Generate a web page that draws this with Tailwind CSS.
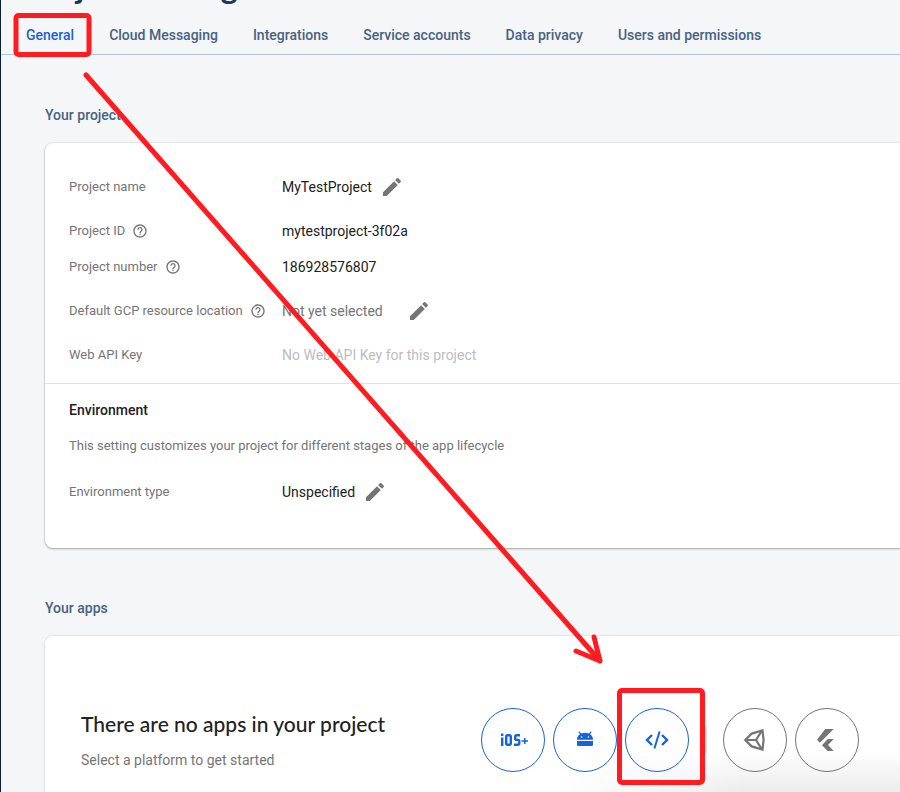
<!DOCTYPE html>
<html lang="en">
<head>
<meta charset="utf-8">
<title>Project settings</title>
<meta name="viewport" content="width=device-width, initial-scale=1">
<script src="https://cdn.jsdelivr.net/npm/@tailwindcss/browser@4"></script>
</head>
<body class="bg-[#f4f6f8] font-[Roboto,sans-serif] text-sm leading-5 text-[#212121]">
<svg class="hidden" aria-hidden="true">
  <symbol id="pencil" viewBox="0 0 24 24"><path d="M3 17.25V21h3.75L17.81 9.94l-3.75-3.75L3 17.25zM20.71 7.04a1 1 0 0 0 0-1.41l-2.34-2.34a1 1 0 0 0-1.41 0l-1.83 1.83 3.75 3.75 1.83-1.83z"/></symbol>
  <symbol id="help" viewBox="0 0 24 24"><path d="M11 18h2v-2h-2v2zm1-16C6.48 2 2 6.48 2 12s4.48 10 10 10 10-4.480 10-10S17.520 2 12 2zm0 18c-4.410 0-8-3.590-8-8s3.590-8 8-8 8 3.590 8 8-3.590 8-8 8zm0-14c-2.210 0-4 1.790-4 4h2c0-1.100.9-2 2-2s2 .9 2 2c0 2-3 1.750-3 5h2c0-2.250 3-2.500 3-5 0-2.210-1.790-4-4-4z"/></symbol>
</svg>
<div class="relative h-screen overflow-hidden border-l border-[#0b1f38]">
  <header class="border-b border-[#b0c4de]">
    <h1 class="-mt-8 px-6 font-[Lato,sans-serif] text-[33px] leading-9 font-bold text-[#1c3a57]">Project settings</h1>
    <nav class="flex h-[50px] items-center gap-[35px] pt-3 pl-[25px] font-medium whitespace-nowrap text-[#476282]">
      <a href="#" class="text-[#1a5fd0]">General</a>
      <a href="#">Cloud Messaging</a>
      <a href="#">Integrations</a>
      <a href="#">Service accounts</a>
      <a href="#">Data privacy</a>
      <a href="#">Users and permissions</a>
    </nav>
  </header>

  <main class="pl-11">
    <h2 class="mt-[50px] font-medium text-[#476282]">Your project</h2>
    <section class="mt-[18px] rounded-l-lg bg-white shadow-[0_0_2px_rgba(0,0,0,0.18),0_1px_2px_rgba(0,0,0,0.3)]">
      <dl class="grid grid-cols-[213px_1fr] items-center px-6 pt-[22px] pb-[6px] text-[13px] text-[#757575] [&>dd]:text-sm [&>dt]:flex [&>dt]:gap-[7px] [&>dt]:items-center">
        <dt class="h-11">Project name</dt>
        <dd class="flex items-center gap-2 text-[#212121]">MyTestProject <button aria-label="Edit project name"><svg class="size-6 fill-[#757575]"><use href="#pencil"/></svg></button></dd>
        <dt class="h-11">Project ID <svg class="size-4 fill-[#757575]"><use href="#help"/></svg></dt>
        <dd class="text-[#212121]">mytestproject-3f02a</dd>
        <dt class="h-7">Project number <svg class="size-4 fill-[#757575]"><use href="#help"/></svg></dt>
        <dd class="text-[#212121]">186928576807</dd>
        <dt class="mt-2 h-11">Default GCP resource location <svg class="size-4 fill-[#757575]"><use href="#help"/></svg></dt>
        <dd class="mt-2 flex items-center gap-6">Not yet selected <button aria-label="Edit resource location"><svg class="size-6 fill-[#757575]"><use href="#pencil"/></svg></button></dd>
        <dt class="h-11">Web API Key</dt>
        <dd class="text-[#bdbdbd]">No Web API Key for this project</dd>
      </dl>
      <div class="border-t border-[#e0e3e6] px-6 pt-4 pb-[34px]">
        <h3 class="font-medium">Environment</h3>
        <p class="mt-4 text-[13px] text-[#757575]">This setting customizes your project for different stages of the app lifecycle</p>
        <dl class="mt-[14px] grid grid-cols-[213px_1fr] items-center">
          <dt class="flex h-11 items-center text-[13px] text-[#757575]">Environment type</dt>
          <dd class="flex items-center gap-2">Unspecified <button aria-label="Edit environment type"><svg class="size-6 fill-[#757575]"><use href="#pencil"/></svg></button></dd>
        </dl>
      </div>
    </section>

    <h2 class="mt-[50px] font-medium text-[#476282]">Your apps</h2>
    <section class="mt-[18px] flex items-start rounded-l-lg bg-[linear-gradient(to_right,white_60%,transparent_82%),linear-gradient(to_bottom,white_115px,#eaeaea_160px)] pt-[72px] pr-[41px] pb-10 pl-9 shadow-[0_0_2px_rgba(0,0,0,0.25)]">
      <div class="flex-1">
        <h3 class="mt-[2px] font-[Lato,sans-serif] text-[21px] leading-7 font-medium">There are no apps in your project</h3>
        <p class="mt-3 text-[#757575]">Select a platform to get started</p>
      </div>
      <div class="flex items-center gap-2 [&>button]:flex [&>button]:size-16 [&>button]:items-center [&>button]:justify-center [&>button]:rounded-full [&>button]:border">
        <button class="border-[#1763dc] text-[#1763dc]" aria-label="iOS+">
          <svg class="h-4 w-[30px]" viewBox="0 0 30 16" fill="none" stroke="currentColor" stroke-width="2.400"><path d="M4.200 5.500V14M4.200 1.500V4M8.200 4.700q0-1.500 1.500-1.500h1.600q1.500 0 1.500 1.500v6.600q0 1.500-1.500 1.500H9.700q-1.500 0-1.500-1.500zM22 3.200h-3.300q-1.500 0-1.500 1.500v1.700q0 1.500 1.500 1.500h1.100q1.500 0 1.500 1.500v1.900q0 1.500-1.500 1.500H16"/><path d="M23.500 9H30M26.800 6v6" stroke-width="1.500"/></svg>
        </button>
        <button class="border-[#1763dc] text-[#1763dc]" aria-label="Android">
          <svg class="size-4 overflow-visible" viewBox="0 0 16 16" fill="currentColor"><path d="M0 9h16v3.700q0 1.300-1.300 1.300H1.300Q0 14 0 12.700zM0 7.800Q0 4 3 2.200L1.400-.1l.8-.6 2 2.200Q8 0 11.800 1.500l2-2.200.8.6L13 2.200Q16 4 16 7.800z"/><g fill="white"><circle cx="4.600" cy="5" r=".8"/><circle cx="11.400" cy="5" r=".8"/></g></svg>
        </button>
        <button class="border-[#1763dc] text-[#1763dc]" aria-label="Web">
          <svg class="h-[18px] w-6" viewBox="0 0 24 18" fill="none" stroke="currentColor" stroke-width="2.400"><path d="M7 4 2 9l5 5M17 4l5 5-5 5"/><path d="m14.600.5-5.200 17" stroke-width="2"/></svg>
        </button>
        <span class="mx-2 h-[26px] w-[2px] bg-[#e0e0e0]"></span>
        <button class="border-[#757575] text-[#757575]" aria-label="Unity">
          <svg class="size-6" viewBox="0 0 24 24" fill="none" stroke="currentColor" stroke-width="2.200"><path d="M2.200 12 8.700 5.600 19.500 2.400 20.600 12l-1.100 9.600-10.800-3.200z"/><path d="M2.500 12H13l6.200-9.800M13 12l6.200 9.800" stroke-width="2.200"/></svg>
        </button>
        <button class="border-[#757575] text-[#757575]" aria-label="Flutter">
          <svg class="size-6" viewBox="0 0 24 24" fill="currentColor"><path d="M10.300 1h8.400L5 14.700l-3-3zM12.700 11h6l-5.600 6.100 5.600 5.900h-6L7 17.200z"/></svg>
        </button>
      </div>
    </section>
  </main>

  <svg class="pointer-events-none absolute top-0 -left-px h-[792px] w-[900px]" viewBox="0 0 900 792" fill="none" stroke="#ff1b1f" stroke-width="5" stroke-linecap="round" stroke-linejoin="round" aria-hidden="true">
    <rect x="16" y="15.500" width="73" height="39" rx="2.500"/>
    <path d="m86 75 514 586M576 651l24 10-6-24"/>
    <rect x="619.500" y="690.500" width="83" height="92" rx="2.500"/>
  </svg>
</div>
</body>
</html>
